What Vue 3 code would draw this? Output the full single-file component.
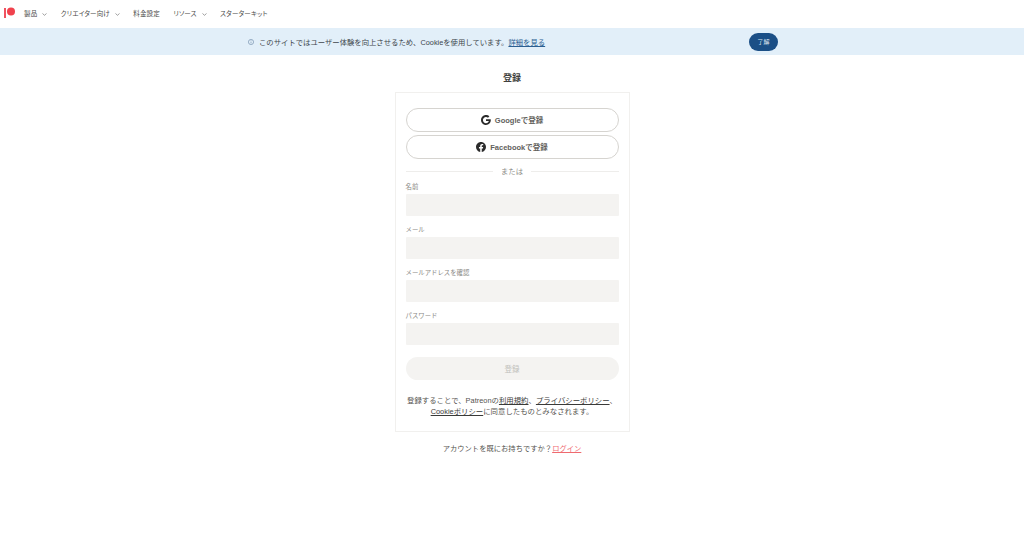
<script setup>
const navItems = [
  { label: '製品', caret: true },
  { label: 'クリエイター向け', caret: true },
  { label: '料金設定', caret: false },
  { label: 'リソース', caret: true },
  { label: 'スターターキット', caret: false },
]
const fields = ['名前', 'メール', 'メールアドレスを確認', 'パスワード']
</script>

<template>
  <div class="page">
    <header class="nav">
      <svg class="logo" width="12" height="13" viewBox="0 0 12 13">
        <rect x="0" y="2" width="2" height="10" fill="#f0525f" />
        <circle cx="7" cy="5.500" r="4" fill="#f0424d" />
      </svg>
      <div class="nav-list">
        <span v-for="item in navItems" :key="item.label" class="nav-item">
          {{ item.label }}
          <svg v-if="item.caret" width="5" height="3" viewBox="0 0 5 3" class="caret">
            <path d="M.5.5 2.500 2.300 4.500.5" fill="none" stroke="#777" stroke-width=".7" />
          </svg>
        </span>
      </div>
    </header>

    <div class="banner">
      <div class="banner-msg">
        <svg width="6" height="6" viewBox="0 0 6 6">
          <circle cx="3" cy="3" r="2.600" fill="none" stroke="#6a86a6" stroke-width=".6" />
          <path d="M3 2.600v1.800M3 1.400v.6" stroke="#6a86a6" stroke-width=".6" />
        </svg>
        <span>このサイトではユーザー体験を向上させるため、Cookieを使用しています。<a class="banner-link">詳細を見る</a></span>
      </div>
      <button class="ok">了解</button>
    </div>

    <main class="main">
      <h1 class="title">登録</h1>
      <section class="card">
        <button class="social">
          <svg width="10" height="10" viewBox="0 0 24 24">
            <path fill="#2b2b2b" d="M12 10h11.300c.1.7.2 1.400.2 2.200C23.500 19 18.800 24 12 24 5.400 24 0 18.600 0 12S5.400 0 12 0c3.200 0 6 1.200 8.100 3.100l-3.300 3.300C15.500 5.200 13.900 4.500 12 4.500c-4.100 0-7.400 3.400-7.400 7.500s3.300 7.500 7.400 7.500c3.700 0 6.300-2.200 6.800-5.200H12z" />
          </svg>
          <span>Googleで登録</span>
        </button>
        <button class="social second">
          <svg width="10" height="10" viewBox="0 0 24 24">
            <path fill="#2b2b2b" d="M24 12C24 5.400 18.600 0 12 0S0 5.400 0 12c0 6 4.400 11 10.100 11.900v-8.400h-3V12h3V9.400c0-3 1.800-4.700 4.500-4.700 1.300 0 2.700.2 2.700.2v3h-1.500c-1.500 0-2 .9-2 1.900V12h3.300l-.5 3.500h-2.800v8.400C19.600 23 24 18 24 12z" />
          </svg>
          <span>Facebookで登録</span>
        </button>
        <div class="divider"><span>または</span></div>
        <div class="fields">
          <label v-for="f in fields" :key="f" class="field">
            <span class="field-label">{{ f }}</span>
            <span class="input"></span>
          </label>
        </div>
        <button class="submit">登録</button>
        <p class="terms">
          登録することで、Patreonの<a>利用規約</a>、<a>プライバシーポリシー</a>、<br />
          <a>Cookieポリシー</a>に同意したものとみなされます。
        </p>
      </section>
      <p class="login">アカウントを既にお持ちですか？<a>ログイン</a></p>
    </main>
  </div>
</template>

<style>
html, body { margin: 0; background: #fff; }
</style>

<style scoped>
.page {
  width: 1024px;
  height: 537px;
  overflow: hidden;
  font-family: "Liberation Sans", "Noto Sans CJK JP", sans-serif;
  color: #3a3a38;
}
.nav {
  height: 28px;
  display: flex;
  align-items: center;
  padding-left: 4px;
  box-sizing: border-box;
}
.logo { margin-right: 8px; margin-top: -3px; }
.nav-list { display: flex; gap: 13.500px; margin-top: -1px; }
.nav-item {
  font-size: 6.500px;
  font-feature-settings: "palt";
  letter-spacing: .15px;
  line-height: 10px;
  color: #4a4a48;
  display: flex;
  align-items: center;
  gap: 5px;
}
.caret { margin-top: 1px; }
.banner {
  height: 27px;
  background: #e2eff9;
  display: flex;
  align-items: center;
  padding-left: 248px;
  box-sizing: border-box;
}
.banner-msg {
  width: 501px;
  display: flex;
  align-items: center;
  gap: 5px;
  font-size: 7.350px;
  color: #40464c;
}
.banner-link { color: #2b5f92; text-decoration: underline; }
.ok {
  width: 29px;
  height: 18px;
  border: 0;
  border-radius: 9px;
  padding: 0;
  background: #1b4f86;
  color: #dfe8f1;
  font: inherit;
  font-size: 6px;
}
.main { display: flex; flex-direction: column; align-items: center; }
.title {
  margin: 16px 0 7px;
  font-size: 9px;
  line-height: 14px;
  font-weight: 700;
  color: #3f3f3d;
}
.card {
  width: 235px;
  height: 340px;
  box-sizing: border-box;
  border: 1px solid #f1f0ee;
  padding: 15px 10px 0;
  display: flex;
  flex-direction: column;
}
.social {
  height: 24px;
  border: 1px solid #d6d4d0;
  border-radius: 12px;
  background: #fff;
  display: flex;
  align-items: center;
  justify-content: center;
  gap: 4px;
  padding: 0 0 1px;
  font: inherit;
  font-size: 7.500px;
  font-weight: 700;
  color: #62615c;
}
.second { margin-top: 3px; }
.divider {
  display: flex;
  align-items: center;
  gap: 8px;
  margin-top: 6px;
  height: 12px;
  font-size: 7.300px;
  color: #8b8a86;
}
.divider::before, .divider::after {
  content: "";
  flex: 1;
  height: 1px;
  background: #eeedeb;
}
.fields { display: flex; flex-direction: column; gap: 9px; margin-top: 5px; }
.field { display: flex; flex-direction: column; }
.field-label {
  height: 12px;
  font-size: 6.400px;
  line-height: 10px;
  color: #8a8985;
}
.input {
  height: 22px;
  background: #f4f3f1;
  border-radius: 1px;
}
.submit {
  height: 23px;
  margin-top: 12px;
  border: 0;
  border-radius: 12px;
  background: #f4f3f1;
  color: #c0bfbb;
  padding: 0;
  font: inherit;
  font-size: 7.500px;
}
.terms {
  margin: 15px 0 0;
  font-size: 7.400px;
  line-height: 11px;
  text-align: center;
  color: #55544f;
}
.terms a { color: #3a3a38; text-decoration: underline; }
.login {
  margin: 11px 0 0;
  font-size: 7.300px;
  line-height: 12px;
  color: #55544f;
}
.login a { color: #ef6a6f; text-decoration: underline; }
</style>
